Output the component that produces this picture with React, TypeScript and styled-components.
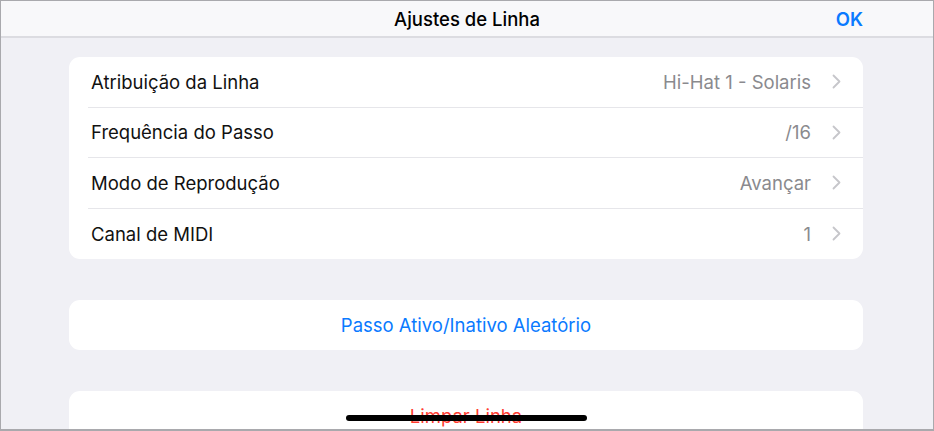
import styled, { createGlobalStyle } from 'styled-components';

const GlobalStyle = createGlobalStyle`
  html, body {
    margin: 0;
    padding: 0;
    background: #f0f0f5;
  }
  body {
    font-family: Inter, "Noto Sans", "Liberation Sans", sans-serif;
    -webkit-font-smoothing: antialiased;
  }
`;

const Screen = styled.div`
  position: relative;
  box-sizing: border-box;
  width: 934px;
  height: 431px;
  overflow: hidden;
  background: #f0f0f5;
  border: 1px solid #a9a9ad;
  border-bottom-width: 2px;
`;

const NavBar = styled.header`
  display: grid;
  grid-template-columns: 1fr auto 1fr;
  align-items: center;
  height: 35px;
  padding: 0 70px 0 70px;
  background: #f8f8fa;
  border-bottom: 2px solid #dcdce1;
`;

const NavTitle = styled.h1`
  grid-column: 2;
  margin: 0;
  font-size: 18.5px;
  font-weight: 500;
  color: #000;
`;

const NavAction = styled.button`
  justify-self: end;
  border: 0;
  padding: 0;
  background: none;
  font-family: inherit;
  font-size: 18.5px;
  font-weight: 600;
  color: #0a7aff;
`;

const Content = styled.main`
  display: flex;
  flex-direction: column;
  gap: 41px;
  padding: 19px 70px 0 68px;
`;

const Group = styled.section`
  background: #fff;
  border-radius: 11px;
  overflow: hidden;
`;

const Row = styled.div`
  box-sizing: border-box;
  display: flex;
  align-items: center;
  height: 50.5px;
  margin-left: 19px;
  padding-right: 22px;
  border-bottom: 1px solid #e6e6ea;

  &:last-child {
    border-bottom: 0;
  }
`;

const Label = styled.span`
  flex: 1;
  padding-left: 3px;
  font-size: 18.5px;
  color: #111;
`;

const Value = styled.span`
  font-size: 18.5px;
  color: #8a8a8e;
`;

const Chevron = styled.svg`
  width: 9px;
  height: 15px;
  margin-left: 21px;
  flex-shrink: 0;
`;

const ActionButton = styled.button<{ $tone: 'blue' | 'red' }>`
  display: block;
  width: 100%;
  height: 50px;
  border: 0;
  background: transparent;
  font-family: inherit;
  font-size: 18.5px;
  color: ${p => (p.$tone === 'red' ? '#ff3b30' : '#0a7aff')};
`;

const HomeIndicator = styled.div`
  position: absolute;
  left: 345px;
  bottom: 8px;
  width: 241px;
  height: 6px;
  border-radius: 3px;
  background: #000;
`;

const rows = [
  { label: 'Atribuição da Linha', value: 'Hi-Hat 1 - Solaris' },
  { label: 'Frequência do Passo', value: '/16' },
  { label: 'Modo de Reprodução', value: 'Avançar' },
  { label: 'Canal de MIDI', value: '1' },
];

export default function App() {
  return (
    <>
      <GlobalStyle />
      <Screen>
        <NavBar>
          <NavTitle>Ajustes de Linha</NavTitle>
          <NavAction>OK</NavAction>
        </NavBar>
        <Content>
          <Group>
            {rows.map(r => (
              <Row key={r.label}>
                <Label>{r.label}</Label>
                <Value>{r.value}</Value>
                <Chevron viewBox="0 0 9 15">
                  <path d="M1.5 1.5 L7.5 7.5 L1.5 13.5" fill="none" stroke="#c6c6ca" strokeWidth="1.8" strokeLinecap="round" strokeLinejoin="round" />
                </Chevron>
              </Row>
            ))}
          </Group>
          <Group>
            <ActionButton $tone="blue">Passo Ativo/Inativo Aleatório</ActionButton>
          </Group>
          <Group>
            <ActionButton $tone="red">Limpar Linha</ActionButton>
          </Group>
        </Content>
        <HomeIndicator />
      </Screen>
    </>
  );
}
